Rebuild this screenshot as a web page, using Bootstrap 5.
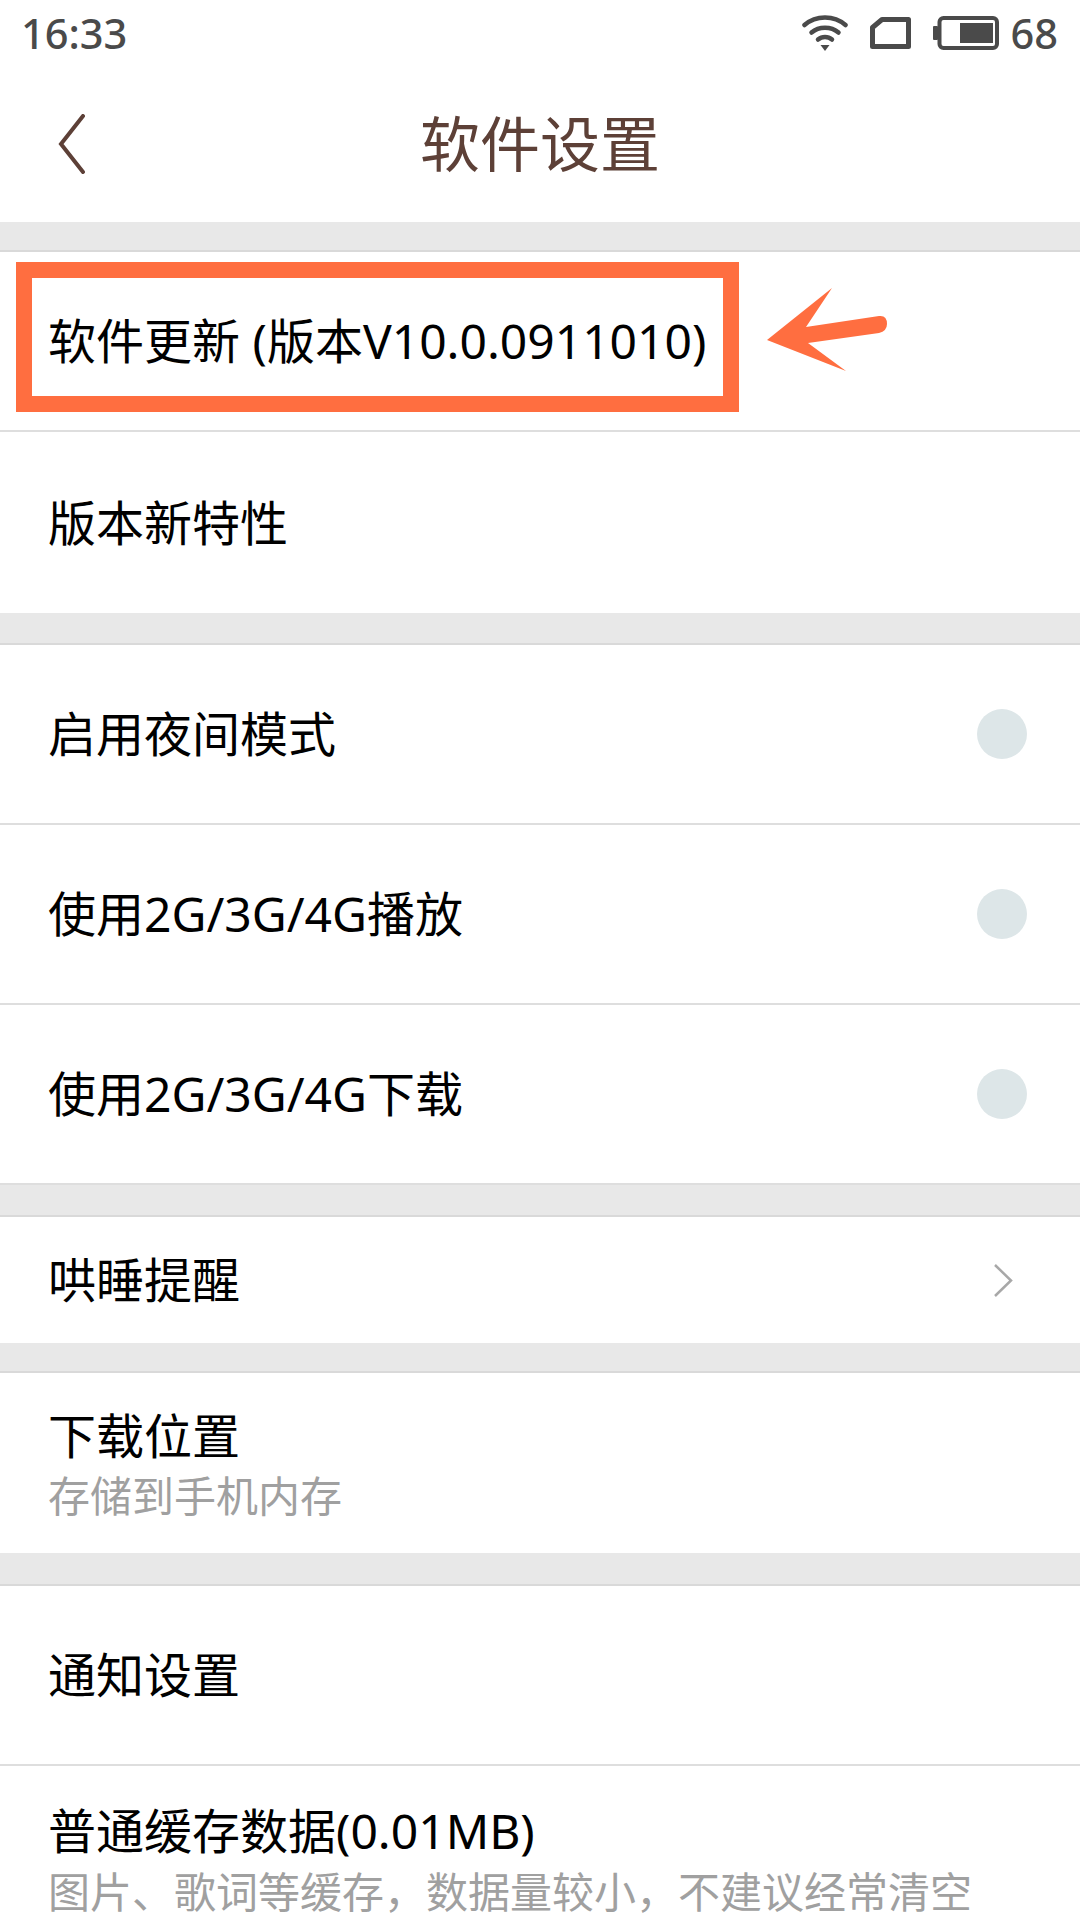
<!doctype html>
<html lang="zh"><head><meta charset="utf-8">
<link rel="stylesheet" href="https://cdn.jsdelivr.net/npm/bootstrap@5.3.0/dist/css/bootstrap.min.css">
<style>
html,body{margin:0;background:#fff}
body{width:1080px;height:1920px;overflow:hidden;font-family:"Noto Sans","Noto Sans CJK SC",sans-serif;color:#000}
.status-strip{height:66px;padding:0 22px 0 21px;color:#4a4a4a;font-size:41.5px;font-weight:500;line-height:66px}
.status-icons{gap:22px}
.batt-num{margin-left:-10px}
.title-strip{height:156px}
.back-link{left:58px;top:50%;transform:translateY(-50%);display:flex}
.page-title{font-size:60px;color:#5d4037;line-height:1}
.gap-band{background:#e8e8e8;height:32px;border-bottom:2px solid #d9d9d9}
.gap-thin{height:30px}.gap-wide{height:33px}
.row-item{background:#fff;padding:0 48px;font-size:48px;line-height:1.2;height:180px;border-bottom:2px solid #dedede}
.row-item.last-in-group{border-bottom:0}
.h-181{height:181px}.h-126{height:126px}
.two-line{padding-top:7px}
.two-line.tight-top{padding-top:2px}
.sub-text{font-size:42px;color:#a0a0a0;line-height:1.2;margin-top:7px}
.toggle-dot{width:50px;height:50px;border-radius:50%;background:#dde6e8;margin-right:5px}
.go-chevron{margin-right:19px}
.red-frame{left:16px;top:262px;width:723px;height:150px;border:16px solid #ff6e40}
.red-arrow{left:765px;top:286px}
</style></head><body>
<div class="position-relative">
<div class="status-strip d-flex justify-content-between align-items-center">
<span>16:33</span>
<div class="status-icons d-flex align-items-center">
<svg width="46" height="38" viewBox="0 0 46 38" fill="none" stroke="#4a4a4a" stroke-width="4.5" stroke-linecap="round"><path d="M2.500 11C14 1 32 1 43.500 11"/><path d="M9.500 18.500C17 12 29 12 36.500 18.500"/><path d="M16 25.500C20 22 26 22 30 25.500"/><path d="M18.500 31L23 37 27.500 31Z" fill="#4a4a4a" stroke="none"/></svg>
<svg width="41" height="32" viewBox="0 0 41 32" fill="none" stroke="#4a4a4a" stroke-width="5"><path d="M12 2.500H38.500V29.500H2.500V10.500Z" stroke-linejoin="round"/></svg>
<svg width="66" height="34" viewBox="0 0 66 34"><rect x="0" y="10" width="5" height="14" rx="1" fill="#4a4a4a"/><rect x="6.500" y="2" width="57.500" height="30" rx="4" fill="none" stroke="#4a4a4a" stroke-width="4"/><rect x="27" y="7" width="33" height="20" fill="#4a4a4a"/></svg>
<span class="batt-num">68</span>
</div></div>
<div class="title-strip position-relative d-flex justify-content-center align-items-center">
<a class="back-link position-absolute" href="#" aria-label="返回"><svg width="28" height="60" viewBox="0 0 28 60" fill="none" stroke="#5d4037" stroke-width="4" stroke-linecap="round"><path d="M25 2L3 30 25 58"/></svg></a>
<div class="page-title">软件设置</div>
</div>
<div class="gap-band gap-thin"></div>
<div class="row-item d-flex align-items-center">软件更新 (版本V10.0.0911010)</div>
<div class="row-item h-181 last-in-group d-flex align-items-center">版本新特性</div>
<div class="gap-band"></div>
<div class="row-item d-flex align-items-center justify-content-between">启用夜间模式<span class="toggle-dot"></span></div>
<div class="row-item d-flex align-items-center justify-content-between">使用2G/3G/4G播放<span class="toggle-dot"></span></div>
<div class="row-item d-flex align-items-center justify-content-between">使用2G/3G/4G下载<span class="toggle-dot"></span></div>
<div class="gap-band"></div>
<div class="row-item h-126 last-in-group d-flex align-items-center justify-content-between">哄睡提醒<svg class="go-chevron" width="20" height="33" viewBox="0 0 20 33" fill="none" stroke="#a8a8a8" stroke-width="2.500"><path d="M2 1L18 16.500 2 32"/></svg></div>
<div class="gap-band gap-thin"></div>
<div class="row-item two-line tight-top last-in-group d-flex flex-column justify-content-center"><div>下载位置</div><div class="sub-text">存储到手机内存</div></div>
<div class="gap-band gap-wide"></div>
<div class="row-item d-flex align-items-center">通知设置</div>
<div class="row-item two-line last-in-group d-flex flex-column justify-content-center"><div>普通缓存数据(0.01MB)</div><div class="sub-text">图片、歌词等缓存，数据量较小，不建议经常清空</div></div>
<div class="red-frame position-absolute"></div>
<svg class="red-arrow position-absolute" width="126" height="88" viewBox="0 0 126 88"><path d="M2 54L67 2 41 41 114 30Q122 29 122 38 122 45 114 47L43 57 81 85Z" fill="#ff6e40"/></svg>
</div>
<script src="https://cdn.jsdelivr.net/npm/bootstrap@5.3.0/dist/js/bootstrap.bundle.min.js"></script>
</body></html>
